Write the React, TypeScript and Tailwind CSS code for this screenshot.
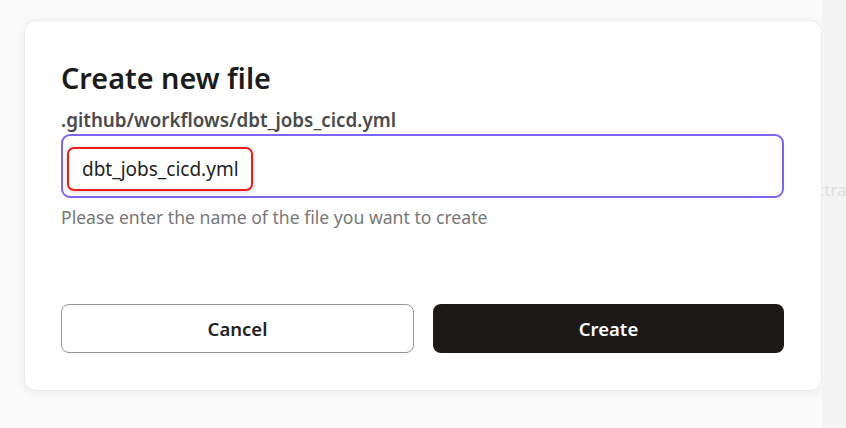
export default function App() {
  return (
    <div
      className="w-[846px] h-[428px] bg-[#fafafa] flex overflow-hidden"
      style={{ fontFamily: '"Noto Sans", "Open Sans", sans-serif' }}
    >
      <div className="pl-[24px] pt-[20px]">
        <div className="w-[798px] h-[371px] bg-white rounded-[12px] border border-[#ececec] shadow-[0_2px_10px_rgba(0,0,0,0.06)] pl-[36px] pr-[37px] pt-[38px] flex flex-col">
          <h1 className="text-[28.8px] leading-[38px] font-semibold text-[#1c1c1c]">Create new file</h1>
          <div className="mt-[11px] text-[18.8px] leading-[24px] font-semibold text-[#4a4a4a]">
            .github/workflows/dbt_jobs_cicd.yml
          </div>
          <div className="mt-[2px] h-[64px] rounded-[9px] border-2 border-[#7a66f2] pl-[4px] pt-[11px]">
            <div className="inline-flex h-[44px] items-center rounded-[7px] border-2 border-[#f01a1a] pl-[13px] pr-[12px] shadow-[0_1px_5px_rgba(0,0,0,0.18)] text-[19px] text-[#1f1f1f]">
              dbt_jobs_cicd.yml
            </div>
          </div>
          <p className="mt-[7px] text-[17.6px] leading-[24px] text-[#777777]">
            Please enter the name of the file you want to create
          </p>
          <div className="mt-[75px] flex gap-[19px]">
            <button className="flex-1 h-[49px] rounded-[8px] border border-[#9b9696] bg-white text-[18.5px] font-semibold text-[#222]">
              Cancel
            </button>
            <button className="flex-1 h-[49px] rounded-[8px] bg-[#1c1a19] text-[18.5px] font-semibold text-white">
              Create
            </button>
          </div>
        </div>
      </div>
      <div className="flex-1 bg-[#f4f4f4] overflow-hidden">
        <div className="mt-[177px] -ml-[6px] text-[17px] text-[#dedede] whitespace-nowrap">ctra</div>
      </div>
    </div>
  );
}
